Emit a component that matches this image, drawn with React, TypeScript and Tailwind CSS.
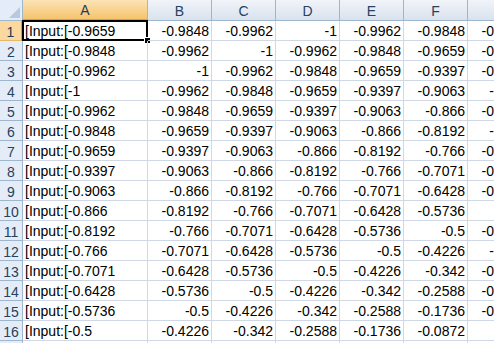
import React from "react";

const seq = [
  "-0.9659", "-0.9848", "-0.9962", "-1", "-0.9962", "-0.9848", "-0.9659", "-0.9397",
  "-0.9063", "-0.866", "-0.8192", "-0.766", "-0.7071", "-0.6428", "-0.5736", "-0.5",
  "-0.4226", "-0.342", "-0.2588", "-0.1736", "-0.0872", "0",
];

const cols = ["A", "B", "C", "D", "E", "F", "G"];
const font = { fontFamily: '"Liberation Sans", Arial, sans-serif' };

export default function App() {
  const rows = Array.from({ length: 17 }, (_, i) => i + 1);
  return (
    <div className="w-[494px] h-[343px] overflow-hidden bg-white" style={font}>
      <div className="grid grid-cols-[23px_125px_64px_64px_64px_64px_64px_64px] grid-rows-[21px] auto-rows-[20px] w-[532px] text-[14px] text-black">
        {/* corner */}
        <div className="relative h-[21px] bg-[#e4ecf7] border-r border-b border-[#9eb6ce]">
          <div className="absolute right-[2px] bottom-[2px] w-0 h-0 border-l-[11px] border-l-transparent border-b-[11px] border-b-[#b7c9de]" />
        </div>
        {cols.map((c, i) => (
          <div
            key={c}
            className={
              i === 0
                ? "h-[21px] pt-[2px] flex items-center justify-center bg-gradient-to-b from-[#fbe3b4] to-[#f6c46b] border-r border-b-2 border-r-[#f2a84a] border-b-[#f29436] text-[#1f3a5c]"
                : "h-[21px] pt-[2px] flex items-center justify-center bg-gradient-to-b from-[#f1f4f9] to-[#d9e2ee] border-r border-b border-[#9eb6ce] text-[#27415f]"
            }
          >
            {c}
          </div>
        ))}
        {rows.map((r) => (
          <React.Fragment key={r}>
            <div
              className={
                r === 1
                  ? "h-[20px] pt-[2px] flex items-center justify-center bg-[#fad89e] border-r-2 border-b border-r-[#f29436] border-b-[#e8b86a] text-[#1f3a5c] leading-none"
                  : "h-[20px] pt-[2px] flex items-center justify-center bg-[#e4ecf7] border-r border-b border-[#9eb6ce] text-[#27415f] leading-none"
              }
            >
              {r}
            </div>
            {cols.map((c, ci) => {
              const v = r + ci - 1 < seq.length ? seq[r + ci - 1] : "";
              const text = ci === 0 ? `[Input:[${v}` : v;
              return (
                <div
                  key={c}
                  className={
                    "relative h-[20px] pt-[1px] border-r border-b border-[#d0d7e5] leading-[19px] whitespace-nowrap " +
                    (ci === 0 ? "pl-[2px] text-left" : "pr-[2px] text-right")
                  }
                >
                  {r <= 16 ? text : ""}
                  {r === 1 && ci === 0 && (
                    <>
                      <div className="absolute -left-[1px] -top-[1px] -right-[1px] -bottom-[1px] border-2 border-black pointer-events-none" />
                      <div className="absolute -right-[4px] -bottom-[4px] w-[7px] h-[7px] bg-black border border-white" />
                    </>
                  )}
                </div>
              );
            })}
          </React.Fragment>
        ))}
      </div>
    </div>
  );
}
